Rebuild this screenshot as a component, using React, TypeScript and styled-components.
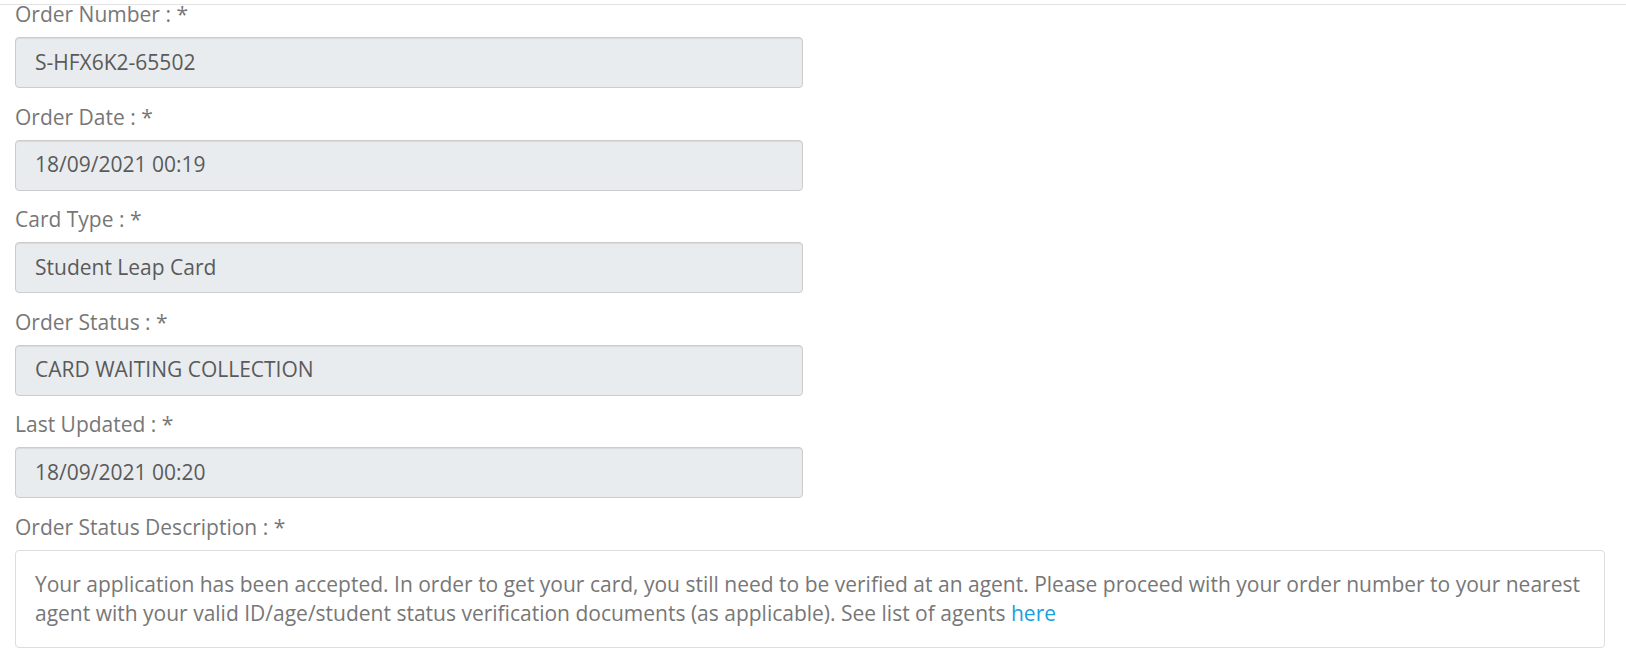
import React from "react";
import styled, { createGlobalStyle } from "styled-components";

const GlobalStyle = createGlobalStyle`
  html, body {
    margin: 0;
    padding: 0;
    background: #ffffff;
  }
  body {
    font-family: "Open Sans", "Liberation Sans", sans-serif;
    font-size: 21px;
    line-height: 1.42857;
    color: #555555;
  }
  * { box-sizing: border-box; }
`;

const Page = styled.div`
  width: 1626px;
  min-height: 662px;
  overflow: hidden;
`;

const TopRule = styled.div`
  height: 1px;
  margin-top: 4px;
  background: #e2e2e2;
`;

const Form = styled.form`
  display: flex;
  flex-direction: column;
  gap: 14.5px;
  margin-top: -5px;
  padding-left: 15px;
`;

const Group = styled.div`
  display: flex;
  flex-direction: column;
  gap: 8px;
`;

const Label = styled.label`
  display: block;
  font-size: 21px;
  line-height: 29px;
  color: #777777;
  font-weight: 400;
`;

const Field = styled.div`
  width: 788px;
  height: 51px;
  display: flex;
  align-items: center;
  padding: 0 19px;
  background: #e9ecef;
  border: 1px solid #cccccc;
  border-radius: 4px;
  box-shadow: inset 0 1px 1px rgba(0, 0, 0, 0.075);
  font-size: 21px;
  color: #5a5a5a;
  white-space: nowrap;
`;

const Description = styled.div`
  width: 1590px;
  padding: 19px 22px 19px 19px;
  border: 1px solid #dddddd;
  border-radius: 4px;
  font-size: 21px;
  line-height: 29px;
  color: #777777;
`;

const Link = styled.a`
  color: #1a9ee2;
  text-decoration: none;
`;

const fields = [
  { label: "Order Number : *", value: "S-HFX6K2-65502" },
  { label: "Order Date : *", value: "18/09/2021 00:19" },
  { label: "Card Type : *", value: "Student Leap Card" },
  { label: "Order Status : *", value: "CARD WAITING COLLECTION" },
  { label: "Last Updated : *", value: "18/09/2021 00:20" },
];

export default function App() {
  return (
    <Page>
      <GlobalStyle />
      <TopRule />
      <Form onSubmit={(e) => e.preventDefault()}>
        {fields.map((f) => (
          <Group key={f.label}>
            <Label>{f.label}</Label>
            <Field>{f.value}</Field>
          </Group>
        ))}
        <Group>
          <Label>Order Status Description : *</Label>
          <Description>
            Your application has been accepted. In order to get your card, you
            still need to be verified at an agent. Please proceed with your
            order number to your nearest agent with your valid
            ID/age/student status verification documents (as applicable). See
            list of agents <Link href="#">here</Link>
          </Description>
        </Group>
      </Form>
    </Page>
  );
}
